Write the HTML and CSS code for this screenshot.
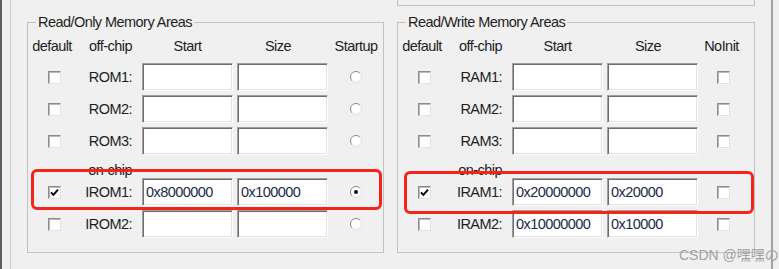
FILE: index.html
```html
<!DOCTYPE html>
<html lang="en">
<head>
    <meta charset="UTF-8">
    <title>Memory Areas</title>
    <link rel="stylesheet" href="styles.css">
</head>
<body>
    <div class="window">
        <div class="pane">
            <div class="columns">
                <div class="col">
                    <fieldset class="group">
                        <legend>Read/Only Memory Areas</legend>
                        <div class="grid">
                            <span class="hdr">default</span><span class="hdr lbl">off-chip</span><span class="hdr">Start</span><span class="hdr sz">Size</span><span class="hdr c5">Startup</span>

                            <span class="chk"></span><span class="lbl">ROM1:</span><input class="field" type="text"><input class="field" type="text"><span class="c5"><svg class="radio" viewBox="0 0 12 12"><circle cx="6" cy="6" r="5.5" fill="#fff"/><path d="M2.1 9.9A5.5 5.5 0 0 1 9.9 2.1" stroke="#8a8a8a" fill="none"/><path d="M9.9 2.1A5.5 5.5 0 0 1 2.1 9.9" stroke="#dcdcdc" fill="none"/></svg></span>

                            <span class="chk"></span><span class="lbl">ROM2:</span><input class="field" type="text"><input class="field" type="text"><span class="c5"><svg class="radio" viewBox="0 0 12 12"><circle cx="6" cy="6" r="5.5" fill="#fff"/><path d="M2.1 9.9A5.5 5.5 0 0 1 9.9 2.1" stroke="#8a8a8a" fill="none"/><path d="M9.9 2.1A5.5 5.5 0 0 1 2.1 9.9" stroke="#dcdcdc" fill="none"/></svg></span>

                            <span class="chk"></span><span class="lbl">ROM3:</span><input class="field" type="text"><input class="field" type="text"><span class="c5"><svg class="radio" viewBox="0 0 12 12"><circle cx="6" cy="6" r="5.5" fill="#fff"/><path d="M2.1 9.9A5.5 5.5 0 0 1 9.9 2.1" stroke="#8a8a8a" fill="none"/><path d="M9.9 2.1A5.5 5.5 0 0 1 2.1 9.9" stroke="#dcdcdc" fill="none"/></svg></span>

                            <span></span><span class="lbl sub">on-chip</span><span></span><span></span><span></span>

                            <span class="chk on"><svg viewBox="0 0 11 11"><path d="M2 5.3l2.4 2.5 4.6-5.2" stroke="#000" stroke-width="1.9" fill="none"/></svg></span><span class="lbl">IROM1:</span><input class="field" type="text" value="0x8000000"><input class="field" type="text" value="0x100000"><span class="c5"><svg class="radio" viewBox="0 0 12 12"><circle cx="6" cy="6" r="5.5" fill="#fff"/><path d="M2.1 9.9A5.5 5.5 0 0 1 9.9 2.1" stroke="#8a8a8a" fill="none"/><path d="M9.9 2.1A5.5 5.5 0 0 1 2.1 9.9" stroke="#dcdcdc" fill="none"/><circle cx="6" cy="6" r="2" fill="#111"/></svg></span>

                            <span class="chk"></span><span class="lbl">IROM2:</span><input class="field" type="text"><input class="field" type="text"><span class="c5"><svg class="radio" viewBox="0 0 12 12"><circle cx="6" cy="6" r="5.5" fill="#fff"/><path d="M2.1 9.9A5.5 5.5 0 0 1 9.9 2.1" stroke="#8a8a8a" fill="none"/><path d="M9.9 2.1A5.5 5.5 0 0 1 2.1 9.9" stroke="#dcdcdc" fill="none"/></svg></span>
                        </div>
                    </fieldset>
                </div>

                <div class="col">
                    <div class="top-box"></div>
                    <fieldset class="group">
                        <legend>Read/Write Memory Areas</legend>
                        <div class="grid rw">
                            <span class="hdr">default</span><span class="hdr lbl">off-chip</span><span class="hdr">Start</span><span class="hdr sz">Size</span><span class="hdr c5">NoInit</span>

                            <span class="chk"></span><span class="lbl">RAM1:</span><input class="field" type="text"><input class="field" type="text"><span class="c5"><span class="chk"></span></span>

                            <span class="chk"></span><span class="lbl">RAM2:</span><input class="field" type="text"><input class="field" type="text"><span class="c5"><span class="chk"></span></span>

                            <span class="chk"></span><span class="lbl">RAM3:</span><input class="field" type="text"><input class="field" type="text"><span class="c5"><span class="chk"></span></span>

                            <span></span><span class="lbl sub">on-chip</span><span></span><span></span><span></span>

                            <span class="chk on"><svg viewBox="0 0 11 11"><path d="M2 5.3l2.4 2.5 4.6-5.2" stroke="#000" stroke-width="1.9" fill="none"/></svg></span><span class="lbl">IRAM1:</span><input class="field" type="text" value="0x20000000"><input class="field" type="text" value="0x20000"><span class="c5"><span class="chk"></span></span>

                            <span class="chk"></span><span class="lbl">IRAM2:</span><input class="field" type="text" value="0x10000000"><input class="field" type="text" value="0x10000"><span class="c5"><span class="chk"></span></span>
                        </div>
                    </fieldset>
                </div>
            </div>
        </div>

        <!-- red marks drawn over the screenshot -->
        <div class="mark mark-left"></div>
        <div class="mark mark-right"></div>
        <span class="watermark">CSDN @嘿嘿の</span>
    </div>
</body>
</html>
```

FILE: styles.css
```css
body { margin: 0; background: #f0f0f0; font-family: "Liberation Sans", Arial, "Noto Sans CJK SC", sans-serif; font-size: 14.5px; letter-spacing: -0.55px; color: #1e1e1e; }
.window { position: relative; width: 779px; height: 269px; box-sizing: border-box; border-left: 2px solid #5f5f5f; overflow: hidden; }
.pane { margin-left: 8px; width: 760px; height: 100%; border-left: 1px solid #c9c9c9; border-right: 2px solid #a3a3a3; }
.columns { display: flex; gap: 13px; padding-left: 16px; }
.col { display: flex; flex-direction: column; }
.col:first-child { width: 357px; padding-top: 14px; }
.col:last-child { width: 358px; }
.top-box { height: 5px; border: 1px solid #c2c2c2; border-top: none; margin-bottom: 8px; }
.group { margin: 0; padding: 0 0 14px; border: 1px solid #c2c2c2; min-width: 0; }
.group legend { margin-left: 8px; padding: 0 2px; line-height: 16px; }
.grid { display: grid; grid-template-columns: 52px 54px 91px 91px 1fr; grid-template-rows: 21px 28px 28px 28px 15px 28px 28px; column-gap: 4px; row-gap: 4px; padding-top: 8px; align-items: center; }
.hdr { text-align: center; line-height: 16px; align-self: start; }
.grid .hdr:first-child { margin-left: -4px; }
.hdr.sz { padding-right: 9px; }
.lbl { text-align: right; padding-right: 6px; }
.lbl.sub { line-height: 22px; align-self: start; }
.c5 { text-align: center; padding-right: 3px; }
.rw .c5 { padding-right: 10px; }
.rw .hdr.c5 { padding-right: 13px; }
.chk { display: block; justify-self: center; width: 13px; height: 13px; box-sizing: border-box; border: 1px solid; border-color: #8c8c8c #e2e2e2 #e2e2e2 #8c8c8c; box-shadow: inset 1px 1px #b8b8b8; background: #fff; }
.c5 .chk { margin: 0 auto; }
.chk svg { display: block; width: 11px; height: 11px; }
.radio { display: block; width: 12px; height: 12px; margin: 0 auto; }
.field { box-sizing: border-box; width: 91px; height: 28px; margin: 0; padding: 0 3px; font: inherit; letter-spacing: -0.55px; color: #1a2a4a; background: #fff; border: 1px solid; border-color: #a0a0a0 #fff #fff #a0a0a0; box-shadow: inset 1px 1px #6d6d6d, inset -1px -1px #e3e3e3; outline: none; }
.mark { position: absolute; border: 3px solid #f5241b; border-radius: 6px; box-sizing: border-box; }
.mark-left { left: 29px; top: 169px; width: 351px; height: 41px; }
.mark-right { left: 402px; top: 171px; width: 350px; height: 43px; }
.watermark { position: absolute; left: 677px; top: 244px; font-size: 14px; letter-spacing: 0; color: #a2a2a2; }
```
